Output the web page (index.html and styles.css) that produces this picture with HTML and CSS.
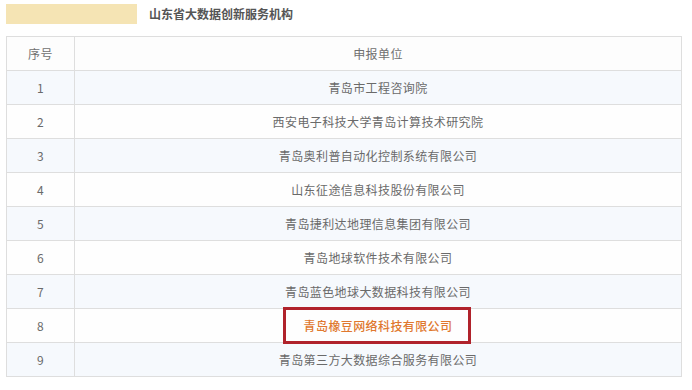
FILE: index.html
```html
<!DOCTYPE html>
<html lang="zh">
<head>
<meta charset="utf-8">
<link rel="stylesheet" href="styles.css">
</head>
<body>
<div class="page">
  <div class="heading">
    <div class="bar"></div>
    <div class="title">山东省大数据创新服务机构</div>
  </div>
  <table class="list">
    <thead>
      <tr><th class="num">序号</th><th>申报单位</th></tr>
    </thead>
    <tbody>
      <tr class="odd"><td class="num">1</td><td>青岛市工程咨询院</td></tr>
      <tr><td class="num">2</td><td>西安电子科技大学青岛计算技术研究院</td></tr>
      <tr class="odd"><td class="num">3</td><td>青岛奥利普自动化控制系统有限公司</td></tr>
      <tr><td class="num">4</td><td>山东征途信息科技股份有限公司</td></tr>
      <tr class="odd"><td class="num">5</td><td>青岛捷利达地理信息集团有限公司</td></tr>
      <tr><td class="num">6</td><td>青岛地球软件技术有限公司</td></tr>
      <tr class="odd"><td class="num">7</td><td>青岛蓝色地球大数据科技有限公司</td></tr>
      <tr><td class="num">8</td><td class="hl-cell"><span class="hl">青岛橡豆网络科技有限公司</span></td></tr>
      <tr class="odd"><td class="num">9</td><td>青岛第三方大数据综合服务有限公司</td></tr>
    </tbody>
  </table>
</div>
</body>
</html>
```
FILE: styles.css
```css
html, body {
  margin: 0;
  padding: 0;
  background: #fff;
}
.page {
  padding: 4px 10px 0 6px;
  font-family: "Noto Sans CJK SC", "Noto Sans", sans-serif;
  color: #6a6a6a;
}
.heading {
  display: flex;
  align-items: center;
  gap: 12px;
  height: 20px;
}
.bar {
  width: 131px;
  height: 20px;
  background: #f5e4b4;
}
.title {
  font-size: 12px;
  font-weight: 700;
  color: #555;
  line-height: 20px;
}
.list {
  margin-top: 12px;
  width: 676px;
  border-collapse: collapse;
  font-size: 12px;
  letter-spacing: 0.4px;
}
.list th, .list td {
  border: 1px solid #dedede;
  height: 33px;
  padding: 0;
  text-align: center;
  font-weight: 400;
  line-height: 16px;
}
.list th {
  background: #fdfdfd;
  color: #707070;
}
.list .num {
  width: 67px;
}
.list tbody tr {
  background: #fefefe;
}
.list tbody tr.odd {
  background: #f6f9fd;
}
.hl-cell {
  position: relative;
}
.hl {
  color: #e0782e;
  font-weight: 500;
}
.hl-cell::after {
  content: "";
  position: absolute;
  left: 208px;
  top: -2px;
  width: 182px;
  height: 31px;
  border: 3px solid #b0222b;
}
```
